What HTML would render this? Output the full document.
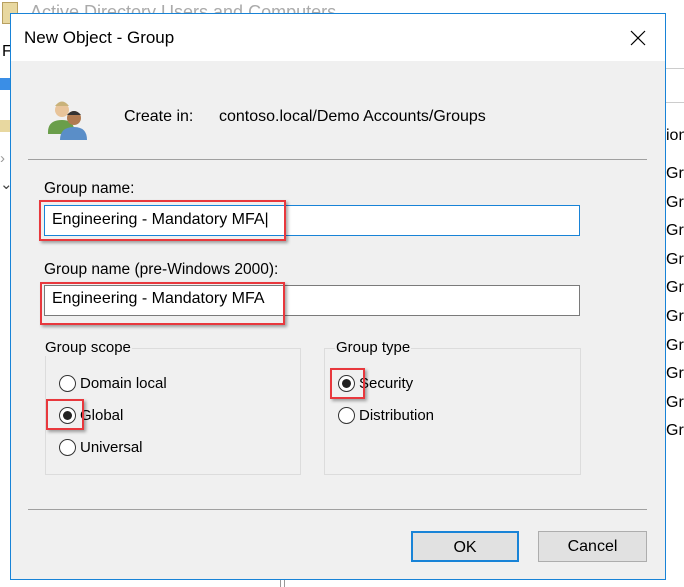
<!DOCTYPE html>
<html><head><meta charset="utf-8"><style>
body{margin:0;width:684px;height:587px;position:relative;background:#fff;overflow:hidden;font-family:"Liberation Sans",sans-serif;color:#000}
.a{position:absolute}
.t{font-size:15px;white-space:nowrap}
.in{position:absolute;background:#fff;border:1px solid #7a7a7a;height:31px;box-sizing:border-box}
.red{position:absolute;border:2px solid #e8383d;box-sizing:border-box;box-shadow:2px 2px 3px rgba(0,0,0,.35)}
.grp{position:absolute;border:1px solid #dcdcdc;box-sizing:border-box}
.rad{position:absolute;width:17px;height:17px;border:1px solid #333;border-radius:50%;background:#fff;box-sizing:border-box}
.rad.on::after{content:"";position:absolute;left:3px;top:3px;width:9px;height:9px;border-radius:50%;background:#222}
.btn{position:absolute;height:31px;background:#e1e1e1;border:1px solid #adadad;box-sizing:border-box;text-align:center;line-height:29px;font-size:16px}
</style></head><body>
<div class="a t" style="left:30px;top:2px;color:#aaa;font-size:18px">Active Directory Users and Computers</div>
<div class="a" style="left:2px;top:2px;width:14px;height:20px;background:#e8d8a0;border:1px solid #b8a060"></div>
<div class="a t" style="left:2px;top:43px;font-size:16px">F</div>
<div class="a" style="left:0;top:78px;width:10px;height:12px;background:#3a8ee6"></div>
<div class="a" style="left:0;top:120px;width:10px;height:12px;background:#e8d8a0"></div>
<div class="a t" style="left:0;top:150px;color:#999">›</div>
<div class="a t" style="left:0;top:175px;color:#444">⌄</div>
<div class="a" style="left:665px;top:68px;width:19px;height:1px;background:#ccc"></div>
<div class="a" style="left:665px;top:102px;width:19px;height:1px;background:#ccc"></div>
<div class="a t" style="left:666px;top:127px;font-size:16px">ion</div>
<div class="a t" style="left:666px;top:160px;line-height:28.6px;font-size:16px">Gr<br>Gr<br>Gr<br>Gr<br>Gr<br>Gr<br>Gr<br>Gr<br>Gr<br>Gr</div>
<div class="a" style="left:280px;top:579px;width:3px;height:8px;border-left:1px solid #999;border-right:1px solid #999"></div>

<div class="a" style="left:10px;top:13px;width:656px;height:567px;border:1px solid #1883d7;box-sizing:border-box;background:#f0f0f0">
 <div class="a" style="left:0;top:0;width:654px;height:47px;background:#fff"></div>
 <div class="a t" style="left:13px;top:14px;font-size:17px">New Object - Group</div>
 <svg class="a" style="left:619px;top:16px" width="16" height="16"><path d="M1 1L15 15M15 1L1 15" stroke="#000" stroke-width="1.2"/></svg>
 <svg class="a" style="left:33px;top:82px" width="50" height="46" viewBox="0 0 50 46">
  <circle cx="18" cy="14" r="7" fill="#e8c49a"/><path d="M11 10q7-9 14 0" fill="#c9b27a"/>
  <path d="M4 36q0-12 14-12q10 0 12 8v6H4z" fill="#6a9e4a"/>
  <circle cx="30" cy="22" r="7" fill="#b07a50"/><path d="M23 19q7-8 14 0" fill="#333"/>
  <path d="M16 44q0-13 14-13q13 0 13 13z" fill="#5a8ec8"/>
 </svg>
 <div class="a t" style="left:113px;top:94px;font-size:16px">Create in:</div>
 <div class="a t" style="left:208px;top:94px;font-size:16px">contoso.local/Demo Accounts/Groups</div>
 <div class="a" style="left:17px;top:145px;width:619px;height:1px;background:#a0a0a0"></div>
 <div class="a t" style="left:33px;top:166px;font-size:15.5px">Group name:</div>
 <div class="in" style="left:33px;top:191px;width:536px;border-color:#1883d7"></div>
 <div class="red" style="left:28px;top:186px;width:247px;height:41px"></div>
 <div class="a t" style="left:41px;top:197px;font-size:16px">Engineering - Mandatory MFA<span style="font-weight:100">|</span></div>
 <div class="a t" style="left:33px;top:247px;font-size:15.5px">Group name (pre-Windows 2000):</div>
 <div class="in" style="left:33px;top:271px;width:536px"></div>
 <div class="red" style="left:29px;top:268px;width:245px;height:43px"></div>
 <div class="a t" style="left:41px;top:276px;font-size:16px">Engineering - Mandatory MFA</div>
 <div class="grp" style="left:34px;top:334px;width:256px;height:127px"></div>
 <div class="a t" style="left:33px;top:325px;background:#f0f0f0;padding:0 1px">Group scope</div>
 <div class="rad" style="left:48px;top:361px"></div><div class="a t" style="left:69px;top:361px">Domain local</div>
 <div class="rad on" style="left:48px;top:393px"></div><div class="a t" style="left:69px;top:393px">Global</div>
 <div class="rad" style="left:48px;top:425px"></div><div class="a t" style="left:69px;top:425px">Universal</div>
 <div class="red" style="left:35px;top:385px;width:38px;height:31px"></div>
 <div class="grp" style="left:313px;top:334px;width:257px;height:127px"></div>
 <div class="a t" style="left:324px;top:325px;background:#f0f0f0;padding:0 1px">Group type</div>
 <div class="rad on" style="left:327px;top:361px"></div><div class="a t" style="left:348px;top:361px">Security</div>
 <div class="rad" style="left:327px;top:393px"></div><div class="a t" style="left:348px;top:393px">Distribution</div>
 <div class="red" style="left:319px;top:354px;width:35px;height:31px"></div>
 <div class="a" style="left:17px;top:495px;width:619px;height:1px;background:#a0a0a0"></div>
 <div class="btn" style="left:400px;top:517px;width:108px;border:2px solid #1883d7">OK</div>
 <div class="btn" style="left:527px;top:517px;width:109px">Cancel</div>
</div>
</body></html>
